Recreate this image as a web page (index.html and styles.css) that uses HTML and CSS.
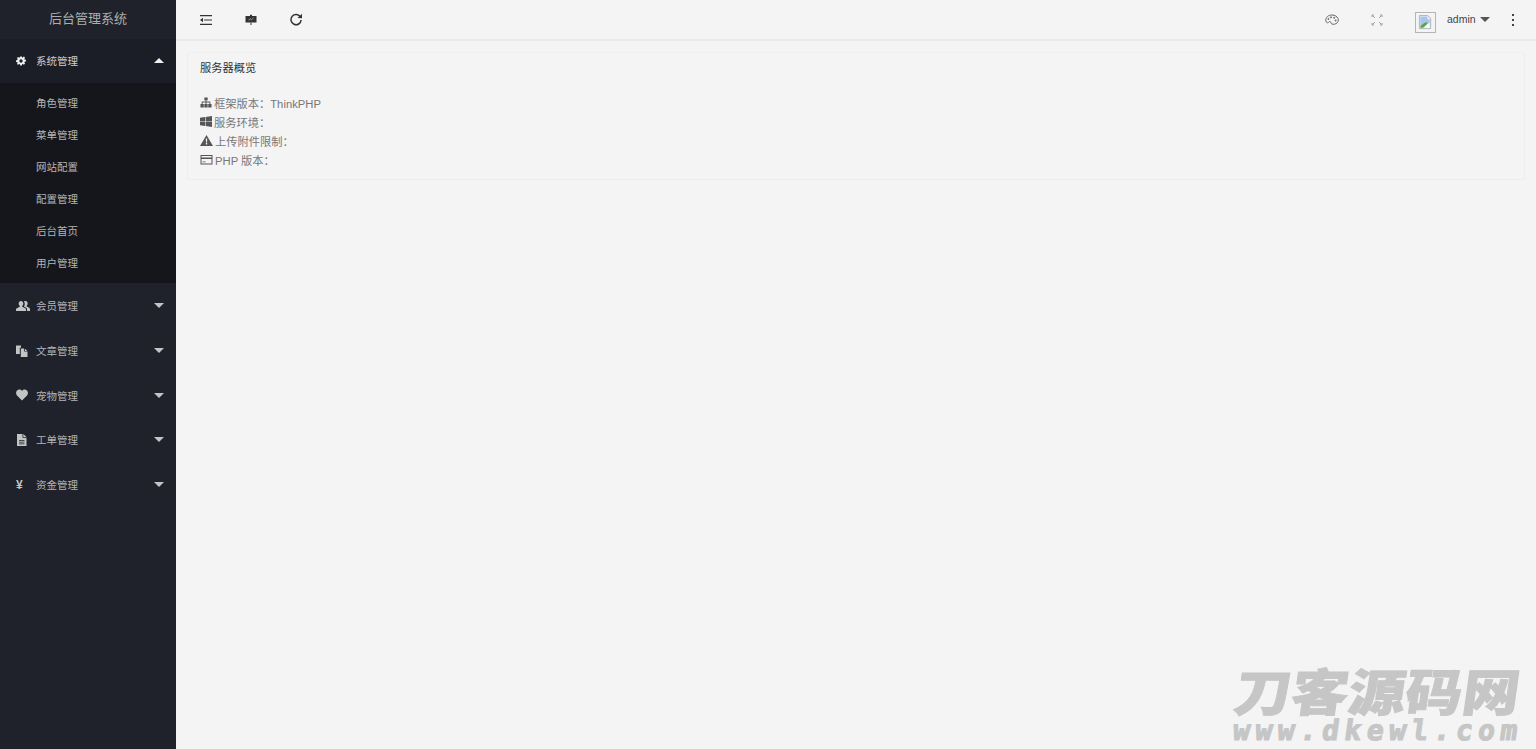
FILE: index.html
```html
<!DOCTYPE html>
<html lang="en">
<head>
  <meta charset="UTF-8">
  <meta name="viewport" content="width=device-width, initial-scale=1.0">
  <title>后台管理系统</title>
  <link rel="stylesheet" href="styles.css">
</head>
<body>
  <aside class="sidebar">
    <div class="logo">后台管理系统</div>
    <nav>
      <div class="menu-title menu-open">
        <svg class="menu-icon menu-icon-small" viewBox="0 0 12 12"><path fill-rule="evenodd" d="M5 .5h2l.3 1.500 1-.4 1.200-.9 1.400 1.400-.9 1.200.4 1 1.500.3v2l-1.500.3-.4 1 .9 1.200-1.400 1.400-1.200-.9-1 .4-.3 1.500H5l-.3-1.500-1-.4-1.200.9L1.100 9.600l.9-1.200-.4-1L.1 7.100V5l1.500-.3.4-1-.9-1.200 1.400-1.400 1.200.9 1-.4zM6 4a2 2 0 1 0 0 4 2 2 0 0 0 0-4z"/></svg>
        <span>系统管理</span>
        <i class="caret caret-up"></i>
      </div>
      <ul class="submenu">
        <li>角色管理</li>
        <li>菜单管理</li>
        <li>网站配置</li>
        <li>配置管理</li>
        <li>后台首页</li>
        <li>用户管理</li>
      </ul>
      <div class="menu-title">
        <svg class="menu-icon menu-icon-wide" viewBox="0 0 14 12"><path d="M5 1c1.400 0 2.300 1.100 2.300 2.600 0 1-.4 1.900-1.100 2.400v.8l3 1.400c.5.300.8.700.8 1.300V11H0V9.500c0-.6.300-1 .8-1.300l3-1.400V6c-.7-.5-1.100-1.400-1.100-2.400C2.700 2.100 3.600 1 5 1zM9.500 1c1.300 0 2.200 1.100 2.200 2.500 0 1-.4 1.800-1 2.300v.7l2.500 1.200c.5.200.8.700.8 1.200V11h-3V9.500c0-.9-.5-1.600-1.300-2L8 6.800c.5-.8.800-1.900.7-3 0-1-.3-1.800-.8-2.400.4-.3 1-.4 1.600-.4z"/></svg>
        <span>会员管理</span>
        <i class="caret"></i>
      </div>
      <div class="menu-title">
        <svg class="menu-icon" viewBox="0 0 12 12"><path d="M0 .5h5v2.300H3.800V9H0zM4.800 3.500h3.400v3h3.300V12H4.800zM9 3.700l2.300 2.200H9z"/></svg>
        <span>文章管理</span>
        <i class="caret"></i>
      </div>
      <div class="menu-title">
        <svg class="menu-icon" viewBox="0 0 12 11"><path d="M6 11 1 6C-.3 4.700-.3 2.400 1 1.100 2.400-.3 4.700-.3 6 1.400 7.300-.3 9.600-.3 11 1.100c1.300 1.300 1.300 3.600 0 4.900z"/></svg>
        <span>宠物管理</span>
        <i class="caret"></i>
      </div>
      <div class="menu-title">
        <svg class="menu-icon" viewBox="0 0 12 12"><path fill-rule="evenodd" d="M1 0h5.500v3.700H10.500V12H1zM7.300 0l3.200 3H7.300zM3 6v.8h5.500V6zm0 1.700v.8h5.500v-.8zm0 1.700v.8h5.500v-.8z"/></svg>
        <span>工单管理</span>
        <i class="caret"></i>
      </div>
      <div class="menu-title">
        <span class="menu-icon yen">¥</span>
        <span>资金管理</span>
        <i class="caret"></i>
      </div>
    </nav>
  </aside>

  <div class="content">
    <header class="topbar">
      <div class="tool">
        <svg class="tool-icon" viewBox="0 0 14 12"><path d="M1 1h12v1.200H1zM5 5.400h8v1.200H5zM1 9.800h12V11H1zM4 3.800v4.400L1 6z"/></svg>
      </div>
      <div class="tool">
        <svg class="tool-icon" viewBox="0 0 14 12"><path d="M1.500 2h11v6.500h-11z"/><path d="M6 .8h2v1.200H6zM6.500 8.500h1V11h-1z"/><path class="screen-line" d="M4.500 6.200 6.300 4.800l1.200.9 2-1.700"/></svg>
      </div>
      <div class="tool">
        <svg class="tool-icon tool-icon-refresh" viewBox="0 0 14 14"><path class="refresh-arc" d="M11.500 4.200A5.100 5.100 0 1 0 12.100 7"/><path d="M8.500 4.900 13 5.200V.8z"/></svg>
      </div>
      <div class="topbar-right">
        <div class="tool">
          <svg class="tool-icon tool-icon-line" viewBox="0 0 14 12"><path d="M7 1C3 1 .8 3.500.8 6.200c0 2 1.400 3 2.300 2.500.8-.4 1-1.300 1.900-1.200.9.100.8 1.300 1.300 2 .5.800 2.500 1.200 4.600.2 2-1 3-2.800 2.100-5C12.200 2.500 10 1 7 1z"/><circle cx="3.500" cy="5" r=".6"/><circle cx="6" cy="3.300" r=".6"/><circle cx="9.200" cy="3.800" r=".6"/><circle cx="10.600" cy="6.500" r=".6"/></svg>
        </div>
        <div class="tool">
          <svg class="tool-icon tool-icon-line tool-icon-light" viewBox="0 0 12 12"><path d="M1 3V1h2M9 1h2v2M11 9v2H9M3 11H1V9M2 2l1.800 1.800M10 2 8.200 3.800M10 10 8.200 8.200M2 10l1.800-1.800"/></svg>
        </div>
        <div class="user">
          <div class="avatar">
            <svg class="broken-img" viewBox="0 0 16 16"><path fill="#e9eef5" stroke="#9aa3ad" stroke-width=".8" d="M1.500 .5h9l3 3v11h-12z"/><path fill="#a9c4ea" d="M2.500 1.500h7.500v3h2.500v4l-10 3z"/><path fill="#5aa83c" d="M2.500 13.500v-2l6-4 2 1.500-5 4.500z"/><path fill="#fff" d="M10.500 9 8 13.500h4.500z"/></svg>
          </div>
          <span class="user-name">admin</span>
          <i class="caret caret-dark"></i>
        </div>
        <div class="tool tool-more">
          <span></span><span></span><span></span>
        </div>
      </div>
    </header>

    <main class="main">
      <section class="card">
        <div class="card-title">服务器概览</div>
        <ul class="info-list">
          <li>
            <svg class="info-icon" viewBox="0 0 13 11"><path d="M4.700 0h3.600v3H7v1.500h4.200V7h1.300v4h-3.600V7h1.300V5.500H7V7h1.300v4H4.700V7H6V5.500H2.800V7h1.300v4H.5V7h1.300V4.500H6V3H4.700z"/></svg>
            框架版本：ThinkPHP
          </li>
          <li>
            <svg class="info-icon" viewBox="0 0 12 11"><path d="M0 1.700 5 1v4.200H0zM5.600.9 12 0v5.200H5.600zM0 5.800h5V10L0 9.300zM5.600 5.800H12V11l-6.400-.9z"/></svg>
            服务环境：
          </li>
          <li>
            <svg class="info-icon info-icon-wide" viewBox="0 0 13 11"><path fill-rule="evenodd" d="M6.500 0 13 11H0zM5.800 3.500l.2 4h1l.2-4zM5.800 8v1.500h1.400V8z"/></svg>
            上传附件限制：
          </li>
          <li>
            <svg class="info-icon info-icon-wide" viewBox="0 0 13 11"><path fill-rule="evenodd" d="M.5 1h12v9.500H.5zM1.500 2v1.500h10V2zm0 3V9.500h10V5zM2.500 7.500h3v.8h-3z"/></svg>
            PHP 版本：
          </li>
        </ul>
      </section>
    </main>
  </div>

  <div class="watermark">
    <div class="watermark-name">刀客源码网</div>
    <div class="watermark-url">www.dkewl.com</div>
  </div>
</body>
</html>
```

FILE: styles.css
```css
* {
  box-sizing: border-box;
}

html,
body {
  height: 100%;
}

body {
  margin: 0;
  display: flex;
  overflow: hidden;
  background-color: #f4f4f4;
  color: #777;
  font-family: "Liberation Sans", "Noto Sans CJK SC", sans-serif;
  font-size: 11.25px;
}

ul {
  list-style: none;
  margin: 0;
  padding: 0;
}

/* sidebar */
.sidebar {
  flex: 0 0 176px;
  background-color: #1f222b;
  color: #b4b4b4;
}

.logo {
  height: 38.5px;
  line-height: 38px;
  text-align: center;
  font-size: 13px;
  color: #adadad;
}

.menu-title {
  display: flex;
  align-items: center;
  height: 44.7px;
  padding-left: 16px;
  font-size: 10.5px;
}

.menu-open {
  background-color: #1b1e26;
  color: #cfcfcf;
}

.menu-icon {
  flex: 0 0 12px;
  width: 12px;
  height: 12px;
  margin-right: 8px;
  fill: #c4c4c4;
}

.menu-open .menu-icon {
  fill: #eee;
}

.menu-icon-small {
  flex-basis: 10px;
  width: 10px;
  height: 10px;
  margin-right: 10px;
}

.menu-icon-wide {
  flex-basis: 14px;
  width: 14px;
  margin-right: 6px;
}

.yen {
  font-size: 12px;
  font-weight: bold;
  line-height: 12px;
  color: #c4c4c4;
}

.caret {
  margin-left: auto;
  margin-right: 12px;
  border-left: 5px solid transparent;
  border-right: 5px solid transparent;
  border-top: 5px solid #c4c4c4;
}

.caret-up {
  border-top: 0;
  border-bottom: 5px solid #f0f0f0;
}

.submenu {
  padding: 3.8px 0 4.5px;
  background-color: #15161b;
}

.submenu li {
  height: 32px;
  line-height: 32px;
  padding-left: 36px;
  font-size: 10.5px;
}

/* top bar */
.content {
  flex: 1;
  display: flex;
  flex-direction: column;
  min-width: 0;
}

.topbar {
  display: flex;
  align-items: center;
  flex: 0 0 41px;
  padding-left: 7px;
  border-bottom: 2px solid #ebebeb;
}

.tool {
  display: flex;
  align-items: center;
  justify-content: center;
  width: 45px;
}

.tool-icon {
  width: 14px;
  height: 12px;
  fill: #333;
}

.tool-icon-refresh {
  height: 14px;
}

.tool-icon-line {
  fill: none;
  stroke: #666;
  stroke-width: 1;
}

.tool-icon-light {
  width: 12px;
  stroke: #999;
}

.screen-line {
  fill: none;
  stroke: #b9b9b9;
  stroke-width: 0.8;
}

.refresh-arc {
  fill: none;
  stroke: #333;
  stroke-width: 1.5;
}

.topbar-right {
  display: flex;
  align-items: center;
  margin-left: auto;
}

.user {
  display: flex;
  align-items: center;
  margin-left: 16px;
  width: 75px;
}

.avatar {
  flex: 0 0 21px;
  height: 21px;
  margin-top: 5px;
  padding: 2px;
  border: 1px solid #b5b5b5;
}

.broken-img {
  display: block;
  width: 15px;
  height: 15px;
}

.user-name {
  margin-left: 11px;
  margin-top: -2px;
  font-size: 10.5px;
  color: #444;
}

.caret-dark {
  margin-left: 4px;
  margin-right: 0;
  border-top-color: #555;
}

.tool-more {
  flex-direction: column;
  gap: 3px;
  width: 46px;
}

.tool-more span {
  width: 2px;
  height: 2px;
  background-color: #444;
}

/* card */
.main {
  flex: 1;
  padding: 11px 11px 0;
}

.card {
  height: 128px;
  padding: 7px 12px;
  border: 1px solid #ededed;
  border-top-color: #f0f0f0;
}

.card-title {
  height: 16px;
  line-height: 16px;
  color: #333;
}

.info-list {
  margin-top: 17px;
}

.info-list li {
  display: flex;
  align-items: center;
  gap: 2px;
  height: 19px;
}

.info-icon {
  flex: 0 0 12px;
  width: 12px;
  height: 11px;
  fill: #555;
}

.info-icon-wide {
  flex-basis: 13px;
  width: 13px;
}

/* overlay */
.watermark {
  position: absolute;
  right: 15px;
  bottom: 5px;
  width: 288px;
  color: #c6c6c6;
  transform: skewX(-8deg);
  pointer-events: none;
}

.watermark-name {
  height: 52px;
  line-height: 52px;
  font-family: "Noto Sans CJK SC", sans-serif;
  font-size: 57px;
  font-weight: 900;
  -webkit-text-stroke: 1px #c6c6c6;
  white-space: nowrap;
  transform: scaleY(0.88);
  transform-origin: top;
}

.watermark-url {
  height: 26px;
  line-height: 26px;
  padding-left: 4px;
  font-family: "DejaVu Sans Mono", monospace;
  font-size: 28px;
  font-weight: bold;
  letter-spacing: 5.4px;
  -webkit-text-stroke: 1.2px #c6c6c6;
  white-space: nowrap;
}
```
